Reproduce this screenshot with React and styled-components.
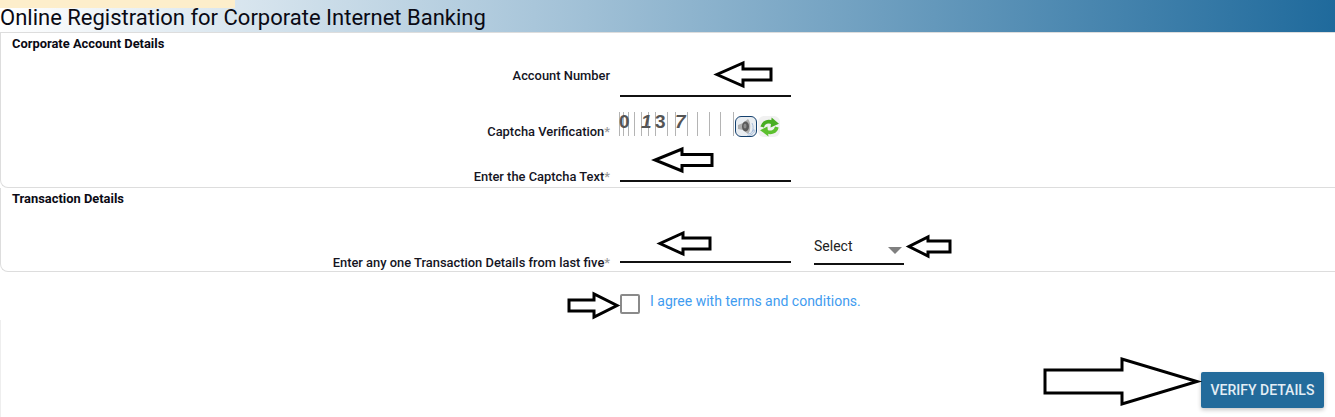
import styled, { createGlobalStyle } from "styled-components";

const GlobalStyle = createGlobalStyle`
  html, body {
    margin: 0;
    padding: 0;
    background: #fff;
    font-family: Roboto, "Liberation Sans", sans-serif;
    overflow: hidden;
  }
`;

const Page = styled.div`
  position: relative;
  width: 1335px;
  height: 417px;
  overflow: hidden;
`;

const Header = styled.header`
  position: relative;
  height: 33px;
  box-sizing: border-box;
  background: linear-gradient(90deg, #ffffff 0%, #a9c6da 40%, #1f6a9c 100%);
  border-bottom: 1px solid #ddd;
`;

const HeaderStrip = styled.div`
  position: absolute;
  top: 0;
  left: 0;
  width: 235px;
  height: 8px;
  background: #fdeecb;
`;

const Title = styled.h1`
  position: relative;
  margin: 0;
  font-size: 22px;
  font-weight: 400;
  line-height: 35px;
  color: #0a0a14;
  white-space: nowrap;
`;

const Section = styled.section`
  box-sizing: border-box;
  height: ${(p) => p.$height}px;
  padding: 3px 0 0 11px;
  border: 1px solid #ddd;
  border-top: 0;
  border-right: 0;
  border-radius: 0 0 0 8px;
`;

const SectionTitle = styled.h2`
  margin: 0;
  font-size: 12.9px;
  font-weight: 700;
  line-height: 15px;
  color: #0a0a14;
`;

const Row = styled.div`
  display: flex;
  align-items: flex-start;
  margin-left: -12px;
  margin-top: ${(p) => p.$top}px;
  height: ${(p) => p.$height}px;
`;

const Label = styled.label`
  width: 610px;
  flex: none;
  margin-top: ${(p) => p.$top || 0}px;
  text-align: right;
  font-size: 12.9px;
  font-weight: 500;
  line-height: 16px;
  color: #15151f;
`;

const Star = styled.span`
  color: #9a9a9a;
`;

const LineField = styled.div`
  box-sizing: border-box;
  flex: none;
  width: ${(p) => p.$width}px;
  height: ${(p) => p.$height}px;
  margin-left: ${(p) => p.$left}px;
  border-bottom: 2px solid #111;
`;

const SelectField = styled(LineField)`
  position: relative;
  padding-top: 9px;
  font-size: 14px;
  line-height: 17px;
  color: #222;
`;

const Caret = styled.span`
  position: absolute;
  right: 2px;
  top: 18px;
  border-left: 7px solid transparent;
  border-right: 7px solid transparent;
  border-top: 7px solid #808080;
`;

const CaptchaBox = styled.div`
  display: flex;
  align-items: flex-start;
  margin-left: 8px;
`;

const AudioButton = styled.div`
  box-sizing: border-box;
  width: 22px;
  height: 21px;
  margin-top: 6px;
  border: 1px solid #14406e;
  border-radius: 6px;
  background: #e9edf1;
  display: flex;
  align-items: center;
  justify-content: center;
`;

const RefreshButton = styled.div`
  width: 22px;
  height: 21px;
  margin-top: 6px;
  margin-left: 1px;
  border-radius: 6px;
  background: #f1f1f1;
  display: flex;
  align-items: center;
  justify-content: center;
`;

const TermsRow = styled.div`
  display: flex;
  align-items: center;
  margin: 22px 0 0 620px;
  height: 20px;
`;

const Checkbox = styled.span`
  box-sizing: border-box;
  width: 20px;
  height: 20px;
  border: 2px solid #8a8a8a;
  border-radius: 2px;
`;

const TermsText = styled.span`
  margin: 0 0 7px 10px;
  font-size: 14px;
  color: #3f9cf0;
`;

const Footer = styled.div`
  height: 97px;
  margin-top: 6px;
  box-sizing: border-box;
  border-left: 1px solid #eee;
  display: flex;
  justify-content: flex-end;
  align-items: flex-start;
  padding: 52px 11px 0 0;
`;

const VerifyButton = styled.button`
  width: 123px;
  height: 36px;
  border: 0;
  border-radius: 2px;
  background: #236b9b;
  color: #e4eef5;
  font-family: inherit;
  font-size: 14px;
  font-weight: 500;
  box-shadow: 0 2px 4px rgba(0, 0, 0, 0.22);
`;

const ArrowSvg = styled.svg`
  position: absolute;
  left: ${(p) => p.$x}px;
  top: ${(p) => p.$y}px;
  overflow: visible;
`;

// hand drawn arrows pasted over the form
const Arrow = ({ x, y, w, h, head, tail, right }) => {
  const m = h / 2;
  const t1 = m - tail / 2;
  const t2 = m + tail / 2;
  const pts = right
    ? `0,${t1} ${w - head},${t1} ${w - head},0 ${w},${m} ${w - head},${h} ${w - head},${t2} 0,${t2}`
    : `${w},${t1} ${head},${t1} ${head},0 0,${m} ${head},${h} ${head},${t2} ${w},${t2}`;
  return (
    <ArrowSvg $x={x} $y={y} width={w} height={h} viewBox={`0 0 ${w} ${h}`}>
      <polygon points={pts} fill="#fff" stroke="#000" strokeWidth="3" />
    </ArrowSvg>
  );
};

const captchaLines = [1, 5, 10, 16, 23, 30, 37, 49, 57, 69, 79, 91, 102, 115];
const captchaDigits = [
  ["0", 1, "normal"],
  ["1", 23, "italic"],
  ["3", 37, "normal"],
  ["7", 57, "italic"],
];

const Captcha = () => (
  <svg width="117" height="28" viewBox="0 0 117 28">
    {captchaLines.map((x) => (
      <rect key={x} x={x} y="2" width="1" height="24" fill="#b4b4b4" />
    ))}
    {captchaDigits.map(([d, x, style]) => (
      <text
        key={d}
        x={x}
        y="18"
        fontFamily="Liberation Sans"
        fontWeight="700"
        fontStyle={style}
        fontSize="19"
        fill="#555"
      >
        {d}
      </text>
    ))}
  </svg>
);

const Speaker = () => (
  <svg width="19" height="18" viewBox="0 0 19 18">
    <path d="M1 7l5-2 5-4c3 3 3 12 0 15l-5-4-5-1z" fill="#b0b0b0" />
    <ellipse cx="8.500" cy="8.500" rx="3.500" ry="5" fill="#5a5a5a" />
    <ellipse cx="8" cy="8" rx="1.500" ry="2.500" fill="#8c8c8c" />
    <path d="M15 5c1.500 3 1.500 6 0 9M11 16c3 0 5-2 6-5M10 18c4 0 7-3 8-6" stroke="#a9bfdc" fill="none" />
  </svg>
);

const Refresh = () => (
  <svg width="21" height="20" viewBox="0 0 20 19">
    <path d="M3 9.500C4 5 9 3 13 5.500" stroke="#48ad22" strokeWidth="3.500" fill="none" />
    <polygon points="12,0.500 19,6.500 11,10" fill="#48ad22" />
    <path d="M17 9.500C16 14 11 16 7 13.500" stroke="#5cc02e" strokeWidth="3.500" fill="none" />
    <polygon points="8,9 1,12.500 9,18.500" fill="#5cc02e" />
  </svg>
);

const App = () => (
  <Page>
    <GlobalStyle />
    <Header>
      <HeaderStrip />
      <Title>Online Registration for Corporate Internet Banking</Title>
    </Header>

    <Section $height={155}>
      <SectionTitle>Corporate Account Details</SectionTitle>
      <Row $top={9} $height={37}>
        <Label $top={8}>Account Number</Label>
        <LineField $left={10} $width={171} $height={37} />
      </Row>
      <Row $top={13} $height={30}>
        <Label $top={14}>Captcha Verification<Star>*</Star></Label>
        <CaptchaBox>
          <Captcha />
          <AudioButton><Speaker /></AudioButton>
          <RefreshButton><Refresh /></RefreshButton>
        </CaptchaBox>
      </Row>
      <Row $top={0} $height={42}>
        <Label $top={29}>Enter the Captcha Text<Star>*</Star></Label>
        <LineField $left={10} $width={171} $height={42} />
      </Row>
    </Section>

    <Section $height={84}>
      <SectionTitle>Transaction Details</SectionTitle>
      <Row $top={23} $height={36}>
        <Label $top={26}>Enter any one Transaction Details from last five<Star>*</Star></Label>
        <LineField $left={10} $width={171} $height={34} />
        <SelectField $left={23} $width={90} $height={36}>
          Select
          <Caret />
        </SelectField>
      </Row>
    </Section>

    <TermsRow>
      <Checkbox />
      <TermsText>I agree with terms and conditions.</TermsText>
    </TermsRow>

    <Footer>
      <VerifyButton>VERIFY DETAILS</VerifyButton>
    </Footer>

    <Arrow x={717} y={63} w={54} h={23} head={26} tail={11} />
    <Arrow x={655} y={149} w={57} h={22} head={27} tail={11} />
    <Arrow x={660} y={233} w={50} h={21} head={23} tail={11} />
    <Arrow x={909} y={237} w={41} h={19} head={19} tail={11} />
    <Arrow x={569} y={294} w={48} h={23} head={23} tail={11} right />
    <Arrow x={1045} y={359} w={152} h={45} head={75} tail={23} right />
  </Page>
);

export default App;
